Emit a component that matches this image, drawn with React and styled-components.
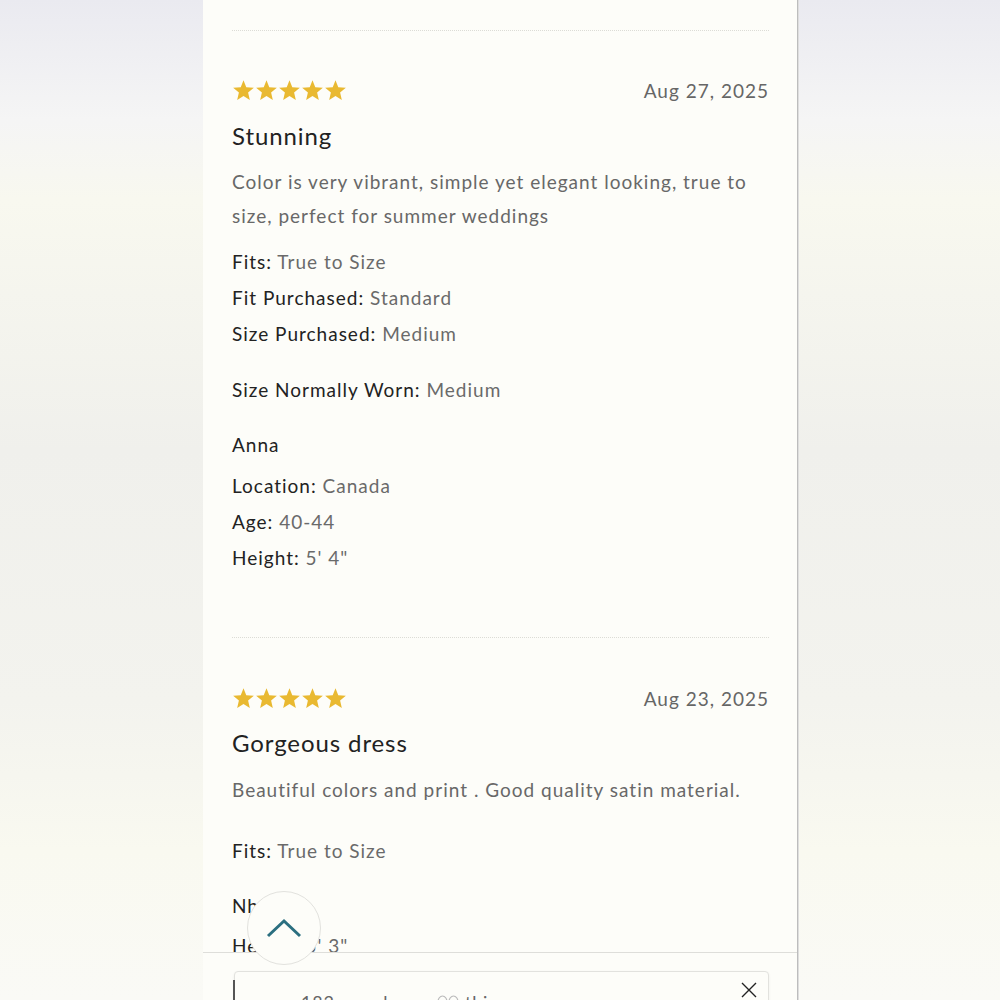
import styled, { createGlobalStyle } from 'styled-components';

const GlobalStyle = createGlobalStyle`
  html, body {
    margin: 0;
    padding: 0;
  }
  body {
    font-family: 'Lato', 'Liberation Sans', sans-serif;
    background: linear-gradient(180deg, #eaeaf0 0%, #f5f5f5 12%, #f8f8ef 20%, #f0f0ec 45%, #f3f3ee 70%, #f9f9f0 85%, #fafaf6 100%);
  }
`;

const Page = styled.div`
  height: 1000px;
  overflow: hidden;
  display: flex;
`;

const Column = styled.main`
  position: relative;
  width: 594px;
  height: 1000px;
  margin-left: 203px;
  background: #fdfdf9;
  border-right: 1px solid #bdbdbd;
  box-shadow: 1px 0 0 #dedede;
  overflow: hidden;
`;

const Content = styled.div`
  padding: 30px 28px 0 29px;
`;

const Divider = styled.hr`
  margin: 0;
  border: 0;
  border-top: 1px dotted #dcdcd6;
`;

const Review = styled.article`
  padding-top: ${(p) => p.$top || 44}px;
  padding-bottom: 61px;
`;

const TopRow = styled.div`
  display: flex;
  align-items: center;
  justify-content: space-between;
  height: 30px;
`;

const Stars = styled.div`
  display: flex;
`;

const DateText = styled.span`
  font-size: 19px;
  color: #666;
  letter-spacing: 1px;
`;

const Title = styled.h3`
  margin: ${(p) => p.$top || 16}px 0 0;
  font-size: 24px;
  line-height: 30px;
  font-weight: 400;
  color: #222;
  letter-spacing: 0.9px;
`;

const Body = styled.p`
  margin: ${(p) => p.$before || 14}px 0 ${(p) => p.$after || 10}px;
  font-size: 19px;
  line-height: 34px;
  color: #686868;
  letter-spacing: 1px;
`;

const Row = styled.div`
  margin-top: ${(p) => p.$top || 0}px;
  font-size: 19px;
  line-height: 36px;
  color: #6a6a6a;
  letter-spacing: 1px;

  b {
    font-weight: 400;
    color: #222;
  }
`;

const Name = styled.div`
  margin-top: 19px;
  font-size: 19px;
  line-height: 36px;
  color: #222;
  letter-spacing: 1px;
`;

const TopButton = styled.button`
  position: absolute;
  left: 44px;
  top: 891px;
  width: 74px;
  height: 74px;
  border-radius: 50%;
  border: 1px solid #e2e2de;
  background: #fdfdf9;
  display: flex;
  align-items: center;
  justify-content: center;
  padding: 0;
  z-index: 2;
`;

const BottomBar = styled.div`
  position: absolute;
  left: 0;
  right: 0;
  top: 952px;
  height: 48px;
  border-top: 1px solid #dededa;
  background: #fdfdf9;
  z-index: 1;
`;

const Notice = styled.div`
  position: relative;
  margin: 18px 28px 0 31px;
  height: 60px;
  border: 1px solid #e2e2de;
  border-radius: 4px;
  background: #fdfdf9;
  box-shadow: 0 1px 3px rgba(0, 0, 0, 0.06);
`;

const Accent = styled.span`
  position: absolute;
  left: -2px;
  top: 8px;
  width: 2px;
  height: 52px;
  background: #555;
`;

const NoticeText = styled.div`
  display: flex;
  align-items: center;
  gap: 6px;
  padding: 19px 0 0 66px;
  font-size: 18px;
  color: #666;
  letter-spacing: 0.8px;
`;

const Close = styled.span`
  position: absolute;
  right: 11px;
  top: 10px;
  display: flex;
`;

const Star = () => (
  <svg width="23" height="23" viewBox="0 0 24 24">
    <polygon
      points="12,1.2 14.9,8.5 22.8,9.1 16.8,14.2 18.6,21.9 12,17.8 5.4,21.9 7.2,14.2 1.2,9.1 9.1,8.5"
      fill="#e9b931"
    />
  </svg>
);

const FiveStars = () => (
  <Stars>
    {[0, 1, 2, 3, 4].map((i) => (
      <Star key={i} />
    ))}
  </Stars>
);

const Eyes = () => (
  <svg width="22" height="14" viewBox="0 0 22 14">
    <ellipse cx="5.5" cy="7" rx="4.5" ry="6" fill="none" stroke="#bbb" strokeWidth="1.2" />
    <ellipse cx="16.5" cy="7" rx="4.5" ry="6" fill="none" stroke="#bbb" strokeWidth="1.2" />
  </svg>
);

const App = () => {
  return (
    <>
      <GlobalStyle />
      <Page>
        <Column>
          <Content>
            <Divider />
            <Review>
              <TopRow>
                <FiveStars />
                <DateText>Aug 27, 2025</DateText>
              </TopRow>
              <Title>Stunning</Title>
              <Body $after={11}>
                Color is very vibrant, simple yet elegant looking, true to size, perfect for summer weddings
              </Body>
              <Row><b>Fits:</b> True to Size</Row>
              <Row><b>Fit Purchased:</b> Standard</Row>
              <Row><b>Size Purchased:</b> Medium</Row>
              <Row $top={20}><b>Size Normally Worn:</b> Medium</Row>
              <Name>Anna</Name>
              <Row $top={5}><b>Location:</b> Canada</Row>
              <Row><b>Age:</b> 40-44</Row>
              <Row><b>Height:</b> 5' 4"</Row>
            </Review>
            <Divider />
            <Review $top={45}>
              <TopRow>
                <FiveStars />
                <DateText>Aug 23, 2025</DateText>
              </TopRow>
              <Title $top={15}>Gorgeous dress</Title>
              <Body $before={15} $after={26}>Beautiful colors and print . Good quality satin material.</Body>
              <Row><b>Fits:</b> True to Size</Row>
              <Name>Nhung</Name>
              <Row $top={4}><b>Height:</b> 5' 3"</Row>
            </Review>
          </Content>

          <TopButton aria-label="Back to top">
            <svg width="36" height="20" viewBox="0 0 36 20">
              <polyline points="2,18 18,3 34,18" fill="none" stroke="#2b6f80" strokeWidth="3" />
            </svg>
          </TopButton>

          <BottomBar>
            <Notice>
              <Accent />
              <NoticeText>
                182 people are <Eyes /> this
              </NoticeText>
              <Close>
                <svg width="16" height="16" viewBox="0 0 16 16">
                  <path d="M1 1 L15 15 M15 1 L1 15" stroke="#222" strokeWidth="1.4" />
                </svg>
              </Close>
            </Notice>
          </BottomBar>
        </Column>
      </Page>
    </>
  );
};

export default App;
